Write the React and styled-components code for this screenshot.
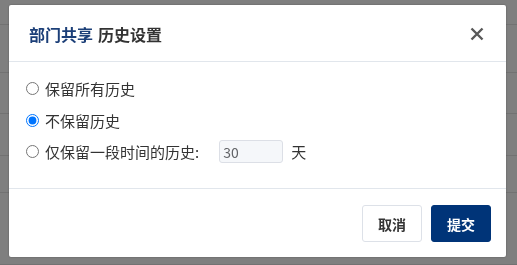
import React, { useState } from 'react';
import styled, { createGlobalStyle } from 'styled-components';

const GlobalStyle = createGlobalStyle`
  html, body {
    margin: 0;
    padding: 0;
    background: #fff;
    font-family: "Noto Sans CJK SC", "Noto Sans", sans-serif;
  }
`;

const Page = styled.div`
  height: 265px;
  overflow: hidden;
`;

const Row = styled.div`
  height: ${p => p.h}px;
  border-bottom: 1px solid #e4e4e4;
  box-sizing: border-box;
`;

const Overlay = styled.div`
  position: fixed;
  inset: 0;
  background: rgba(0, 0, 0, 0.5);
  padding: 5px 10px 8px 9px;
  box-sizing: border-box;
`;

const Dialog = styled.div`
  width: 497px;
  height: 252px;
  background: #fff;
  border-radius: 2px;
  box-shadow: 0 0 2px rgba(0, 0, 0, 0.35);
  display: flex;
  flex-direction: column;
`;

const Header = styled.div`
  height: 57px;
  padding: 0 22px 0 20px;
  display: flex;
  align-items: center;
  justify-content: space-between;
  border-bottom: 1px solid #e1e6ec;
  box-sizing: border-box;
`;

const Title = styled.h3`
  margin: 0;
  font-size: 16px;
  font-weight: 700;
  color: #333;
  line-height: 1;
  padding-top: 1px;
`;

const Brand = styled.span`
  color: #1c3f78;
  margin-right: 5px;
`;

const Close = styled.button`
  border: 0;
  background: none;
  padding: 0;
  width: 14px;
  height: 14px;
  display: flex;
  cursor: pointer;
  margin-top: 2px;
`;

const Body = styled.div`
  flex: 1;
  padding: 11px 0 0 17px;
  display: flex;
  flex-direction: column;
  border-bottom: 1px solid #e1e6ec;
`;

const Option = styled.label`
  height: 31.5px;
  display: flex;
  align-items: center;
  font-size: 15px;
  color: #333;

  input[type='radio'] {
    width: 13px;
    height: 13px;
    margin: 0 6px 0 0;
  }
`;

const DaysInput = styled.input`
  width: 64px;
  height: 23px;
  box-sizing: border-box;
  margin: 0 8px 0 20px;
  padding: 0 3px;
  border: 1px solid #dcdfe6;
  border-radius: 3px;
  background: #f5f7fa;
  color: #606266;
  font-size: 14px;
  font-family: inherit;
  outline: none;
`;

const Footer = styled.div`
  height: 68px;
  padding: 16px 15px 0;
  box-sizing: border-box;
  display: flex;
  justify-content: flex-end;
  gap: 9px;
`;

const Button = styled.button`
  width: 60px;
  height: 37px;
  border-radius: 3px;
  font-family: inherit;
  font-size: 14px;
  font-weight: 700;
  cursor: pointer;
  border: 1px solid ${p => (p.primary ? '#003478' : '#dde1e8')};
  background: ${p => (p.primary ? '#003478' : '#fff')};
  color: ${p => (p.primary ? '#fff' : '#333')};
`;

const rows = [25, 48, 41, 42, 37, 72];

const App = () => {
  const [mode, setMode] = useState('none');

  return (
    <Page>
      <GlobalStyle />
      {rows.map((h, i) => (
        <Row key={i} h={h} />
      ))}
      <Overlay>
        <Dialog>
          <Header>
            <Title>
              <Brand>部门共享</Brand>历史设置
            </Title>
            <Close aria-label="关闭">
              <svg width="14" height="14" viewBox="0 0 14 14">
                <path d="M1.5 1.5L12.5 12.5M12.5 1.5L1.5 12.5" stroke="#595959" strokeWidth="2.4" />
              </svg>
            </Close>
          </Header>
          <Body>
            <Option>
              <input type="radio" name="h" checked={mode === 'all'} onChange={() => setMode('all')} />
              保留所有历史
            </Option>
            <Option>
              <input type="radio" name="h" checked={mode === 'none'} onChange={() => setMode('none')} />
              不保留历史
            </Option>
            <Option>
              <input type="radio" name="h" checked={mode === 'days'} onChange={() => setMode('days')} />
              仅保留一段时间的历史:
              <DaysInput defaultValue="30" />
              天
            </Option>
          </Body>
          <Footer>
            <Button>取消</Button>
            <Button primary>提交</Button>
          </Footer>
        </Dialog>
      </Overlay>
    </Page>
  );
};

export default App;
